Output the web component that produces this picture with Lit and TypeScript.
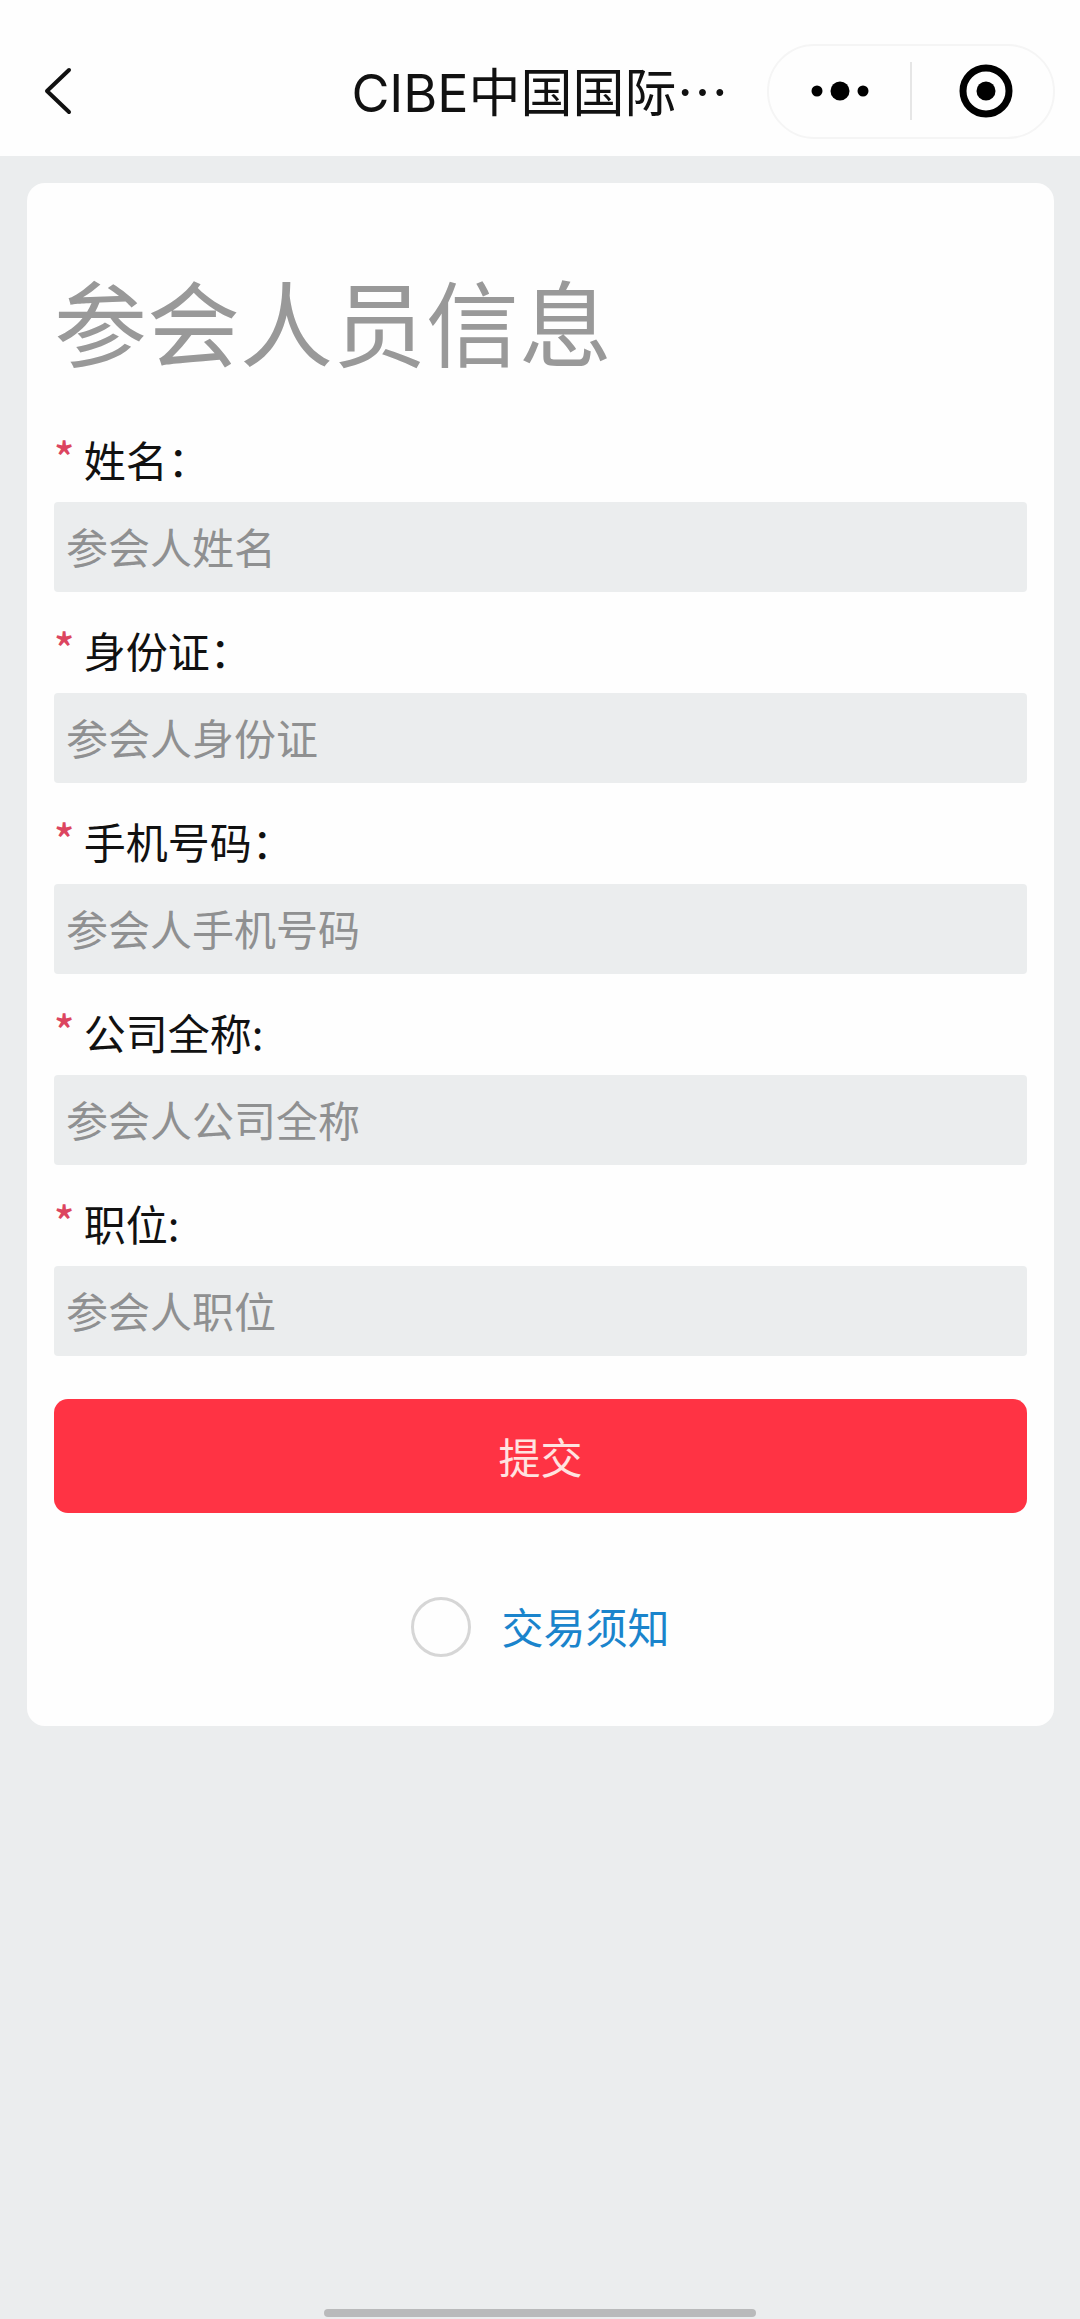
import { LitElement, html, css, svg } from "lit";
import { customElement, property } from "lit/decorators.js";

interface Field {
  id: string;
  label: string;
  placeholder: string;
  type: string;
}

const FIELDS: Field[] = [
  { id: "name", label: "姓名：", placeholder: "参会人姓名", type: "text" },
  { id: "id-card", label: "身份证：", placeholder: "参会人身份证", type: "text" },
  { id: "phone", label: "手机号码：", placeholder: "参会人手机号码", type: "tel" },
  { id: "company", label: "公司全称:", placeholder: "参会人公司全称", type: "text" },
  { id: "position", label: "职位:", placeholder: "参会人职位", type: "text" },
];

const chevron = svg`<path d="M25 3 L3 24 L25 45" fill="none" stroke="#111" stroke-width="4" stroke-linecap="round" stroke-linejoin="round"/>`;
const dots = svg`<circle cx="7" cy="27" r="5.5"/><circle cx="30" cy="27" r="9.5"/><circle cx="53" cy="27" r="5.5"/>`;
const target = svg`<circle cx="27" cy="27" r="23" fill="none" stroke="#000" stroke-width="7"/><circle cx="27" cy="27" r="9.5"/>`;

@customElement("nav-header")
class NavHeader extends LitElement {
  static styles = css`
    :host {
      display: grid;
      grid-template-columns: 1fr auto 1fr;
      align-items: center;
      box-sizing: border-box;
      height: 156px;
      padding: 26px 25px 0;
      background: #fefefe;
    }
    button {
      display: flex;
      align-items: center;
      justify-content: center;
      padding: 0;
      border: 0;
      background: none;
      cursor: pointer;
    }
    svg {
      display: block;
    }
    .back {
      justify-self: start;
      padding-left: 19px;
    }
    .title {
      margin: 0;
      padding-top: 2px;
      font-size: 52px;
      font-weight: 400;
      line-height: 76px;
      color: #111;
      white-space: nowrap;
    }
    .latin {
      font-family: Inter, sans-serif;
    }
    .capsule {
      display: grid;
      grid-template-columns: 1fr 2px 1fr;
      align-items: center;
      justify-self: end;
      box-sizing: border-box;
      width: 288px;
      height: 95px;
      border: 2px solid #f5f5f5;
      border-radius: 48px;
    }
    .divider {
      height: 58px;
      background: #e6e6e6;
    }
    .close {
      padding-left: 6px;
    }
  `;

  render() {
    return html`
      <button class="back" aria-label="返回">
        <svg width="28" height="48" viewBox="0 0 28 48">${chevron}</svg>
      </button>
      <h1 class="title"><span class="latin">CIBE</span>中国国际…</h1>
      <div class="capsule">
        <button aria-label="更多">
          <svg width="60" height="54" viewBox="0 0 60 54">${dots}</svg>
        </button>
        <span class="divider"></span>
        <button class="close" aria-label="关闭">
          <svg width="54" height="54" viewBox="0 0 54 54">${target}</svg>
        </button>
      </div>
    `;
  }
}

@customElement("form-field")
class FormField extends LitElement {
  @property({ attribute: false }) field!: Field;

  static styles = css`
    :host {
      display: flex;
      flex-direction: column;
      gap: 13px;
    }
    .label {
      font-size: 42px;
      line-height: 60px;
      color: #111;
    }
    .star {
      font-weight: 500;
      line-height: 1;
      vertical-align: 3px;
      color: #dc4560;
    }
    .input {
      box-sizing: border-box;
      width: 100%;
      height: 90px;
      margin: 0;
      padding: 0 12px 3px;
      border: 0;
      border-radius: 4px;
      background: #ebedee;
      font: inherit;
      font-size: 42px;
      color: #111;
    }
    .input::placeholder {
      color: #8f9091;
      opacity: 1;
    }
  `;

  render() {
    const f = this.field;
    return html`
      <label class="label" for=${f.id}><span class="star">*</span> ${f.label}</label>
      <input class="input" id=${f.id} name=${f.id} type=${f.type} placeholder=${f.placeholder} required />
    `;
  }
}

@customElement("app-root")
class AppRoot extends LitElement {
  static styles = css`
    :host {
      display: flex;
      flex-direction: column;
      min-height: 100vh;
      background: #ebedee;
      font-family: "Noto Sans CJK SC", sans-serif;
    }
    .card {
      margin: 27px 26px 27px 27px;
      padding: 81px 27px 69px;
      border-radius: 18px;
      background: #fefefe;
    }
    .heading {
      margin: 0 0 53px;
      font-size: 93px;
      font-weight: 400;
      line-height: 112px;
      color: #999;
    }
    .fields {
      display: flex;
      flex-direction: column;
      gap: 28px;
    }
    .submit {
      display: block;
      width: 100%;
      height: 114px;
      margin: 43px 0 84px;
      padding: 0 0 2px;
      border: 0;
      border-radius: 14px;
      background: #ff3344;
      font: inherit;
      font-size: 42px;
      color: #ffe3e0;
      cursor: pointer;
    }
    .agree {
      display: flex;
      align-items: center;
      justify-content: center;
      gap: 30px;
    }
    .radio {
      appearance: none;
      box-sizing: border-box;
      width: 60px;
      height: 60px;
      margin: 0;
      border: 3px solid #d6d6d6;
      border-radius: 50%;
    }
    .radio:checked {
      background: #ff3344;
    }
    .link {
      padding-bottom: 2px;
      font-size: 42px;
      line-height: 58px;
      color: #1a84cc;
      text-decoration: none;
    }
    .home {
      width: 40%;
      height: 8px;
      margin: auto auto 2px;
      border-radius: 4px;
      background: #b9babb;
    }
  `;

  render() {
    return html`
      <nav-header></nav-header>
      <main class="card">
        <h2 class="heading">参会人员信息</h2>
        <form @submit=${(e: Event) => e.preventDefault()}>
          <div class="fields">
            ${FIELDS.map((f) => html`<form-field .field=${f}></form-field>`)}
          </div>
          <button class="submit" type="submit">提交</button>
          <div class="agree">
            <input class="radio" type="radio" id="agree" name="agree" aria-labelledby="terms" />
            <a class="link" id="terms" href="#terms">交易须知</a>
          </div>
        </form>
      </main>
      <div class="home"></div>
    `;
  }
}
